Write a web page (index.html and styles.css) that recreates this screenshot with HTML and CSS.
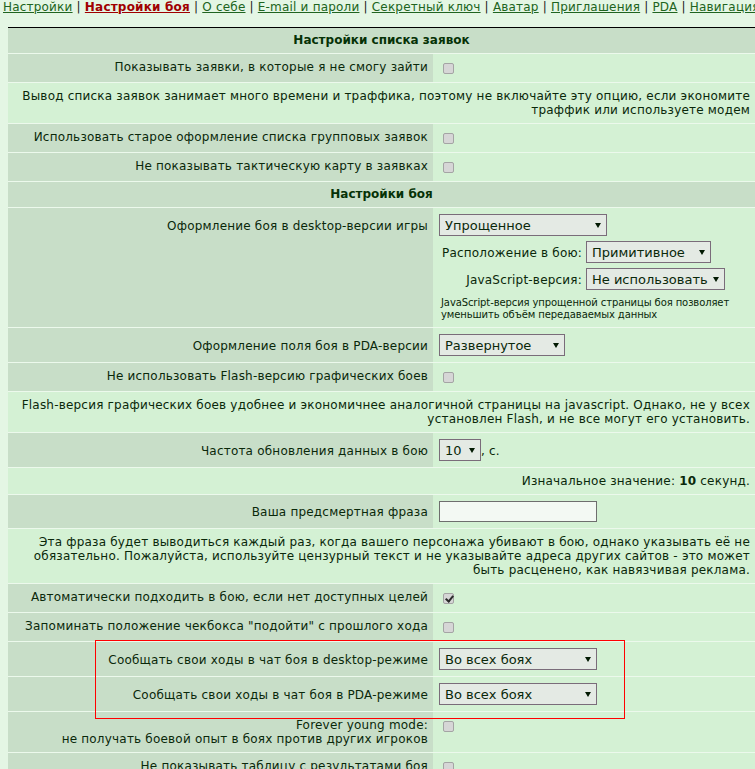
FILE: index.html
```html
<!DOCTYPE html>
<html lang="ru">
<head>
<meta charset="utf-8">
<title>Настройки боя</title>
<link rel="stylesheet" href="styles.css">
</head>
<body>
<nav class="tabs">
  <a href="#">Настройки</a> | <a class="current" href="#">Настройки боя</a> | <a href="#">О себе</a> | <a href="#">E-mail и пароли</a> | <a href="#">Секретный ключ</a> | <a href="#">Аватар</a> | <a href="#">Приглашения</a> | <a href="#">PDA</a> | <a href="#">Навигация</a>
</nav>

<form>
<table class="prefs">
  <tr><th colspan="2" class="sect">Настройки списка заявок</th></tr>
  <tr>
    <td class="lbl">Показывать заявки, в которые я не смогу зайти</td>
    <td class="val"><input type="checkbox" class="cb"></td>
  </tr>
  <tr><td colspan="2" class="note">Вывод списка заявок занимает много времени и траффика, поэтому не включайте эту опцию, если экономите траффик или используете модем</td></tr>
  <tr>
    <td class="lbl">Использовать старое оформление списка групповых заявок</td>
    <td class="val"><input type="checkbox" class="cb"></td>
  </tr>
  <tr>
    <td class="lbl">Не показывать тактическую карту в заявках</td>
    <td class="val"><input type="checkbox" class="cb"></td>
  </tr>

  <tr><th colspan="2" class="sect">Настройки боя</th></tr>
  <tr>
    <td class="lbl">Оформление боя в desktop-версии игры</td>
    <td class="val">
      <span class="dd w-mode"><select><option>Упрощенное</option><option>Обычное</option></select></span>
      <table class="sub">
        <tr>
          <td class="sub-l">Расположение в бою:</td>
          <td><span class="dd w-place"><select><option>Примитивное</option><option>Обычное</option></select></span></td>
        </tr>
        <tr>
          <td class="sub-l">JavaScript-версия:</td>
          <td><span class="dd w-js"><select><option>Не использовать</option><option>Использовать</option></select></span></td>
        </tr>
      </table>
      <div class="hint">JavaScript-версия упрощенной страницы боя позволяет<br>уменьшить объём передаваемых данных</div>
    </td>
  </tr>
  <tr>
    <td class="lbl">Оформление поля боя в PDA-версии</td>
    <td class="val"><span class="dd w-pda"><select><option>Развернутое</option><option>Компактное</option></select></span></td>
  </tr>
  <tr>
    <td class="lbl">Не использовать Flash-версию графических боев</td>
    <td class="val"><input type="checkbox" class="cb"></td>
  </tr>
  <tr><td colspan="2" class="note">Flash-версия графических боев удобнее и экономичнее аналогичной страницы на javascript. Однако, не у всех установлен Flash, и не все могут его установить.</td></tr>
  <tr>
    <td class="lbl">Частота обновления данных в бою</td>
    <td class="val"><span class="dd w-rate"><select><option>10</option><option>20</option><option>30</option></select></span>, с.</td>
  </tr>
  <tr><td colspan="2" class="note">Изначальное значение: <b>10</b> секунд.</td></tr>
  <tr>
    <td class="lbl">Ваша предсмертная фраза</td>
    <td class="val"><input type="text" class="txt"></td>
  </tr>
  <tr><td colspan="2" class="note">Эта фраза будет выводиться каждый раз, когда вашего персонажа убивают в бою, однако указывать её не обязательно. Пожалуйста, используйте цензурный текст и не указывайте адреса других сайтов - это может быть расценено, как навязчивая реклама.</td></tr>
  <tr>
    <td class="lbl">Автоматически подходить в бою, если нет доступных целей</td>
    <td class="val"><input type="checkbox" class="cb" checked></td>
  </tr>
  <tr>
    <td class="lbl">Запоминать положение чекбокса "подойти" с прошлого хода</td>
    <td class="val"><input type="checkbox" class="cb"></td>
  </tr>
  <tr>
    <td class="lbl lbl-mark"><span class="mark"></span>Сообщать свои ходы в чат боя в desktop-режиме</td>
    <td class="val"><span class="dd w-chat"><select><option>Во всех боях</option><option>Никогда</option></select></span></td>
  </tr>
  <tr>
    <td class="lbl">Сообщать свои ходы в чат боя в PDA-режиме</td>
    <td class="val"><span class="dd w-chat"><select><option>Во всех боях</option><option>Никогда</option></select></span></td>
  </tr>
  <tr>
    <td class="lbl">Forever young mode:<br>не получать боевой опыт в боях против других игроков</td>
    <td class="val"><input type="checkbox" class="cb"></td>
  </tr>
  <tr>
    <td class="lbl">Не показывать таблицу с результатами боя</td>
    <td class="val"><input type="checkbox" class="cb"></td>
  </tr>
  <tr>
    <td class="lbl">Не показывать лог боя</td>
    <td class="val"><input type="checkbox" class="cb"></td>
  </tr>
</table>
</form>
</body>
</html>
```

FILE: styles.css
```css
html, body {
  margin: 0;
  padding: 0;
}

body {
  background: #e4f6e4;
  color: #0a280a;
  font-family: "DejaVu Sans", Verdana, sans-serif;
  font-size: 12px;
  letter-spacing: 0.2px;
  overflow: hidden;
}

/* section tabs */
.tabs {
  white-space: nowrap;
  font-size: 12px;
  letter-spacing: 0.2px;
  line-height: 15px;
  height: 27px;
  padding-left: 3px;
  color: #1a1a1a;
}

.tabs a {
  color: #206420;
}

.tabs a.current {
  color: #a00000;
  font-weight: bold;
}

/* settings table */
.prefs {
  margin-left: 8px;
  width: 747px;
  border-collapse: collapse;
  border-top: 1px solid #000;
}

.prefs > tbody > tr > td,
.prefs > tbody > tr > th {
  padding: 6px 5px;
  border-bottom: 1px solid #ecf9ec;
  vertical-align: baseline;
  line-height: 14px;
}

.prefs > tbody > tr > th.sect {
  padding: 5px 5px 6px;
  background: #c8dec8;
  color: #063206;
  font-weight: bold;
  letter-spacing: 0;
  text-align: center;
}

.prefs > tbody > tr > td.lbl {
  background: #c8dec8;
  text-align: right;
  width: 415px;
}

.prefs > tbody > tr > td.val {
  background: #d4f1d4;
  padding-left: 6px;
  text-align: left;
}

.prefs > tbody > tr > td.note {
  background: #d4f1d4;
  text-align: right;
}

.lbl-mark {
  position: relative;
}

/* red frame around the chat options */
.mark {
  position: absolute;
  left: 87px;
  top: -2px;
  width: 530px;
  height: 79px;
  box-sizing: border-box;
  border: 1px solid #ff0000;
  pointer-events: none;
}

/* checkboxes */
.cb {
  appearance: none;
  -webkit-appearance: none;
  box-sizing: border-box;
  width: 11px;
  height: 11px;
  margin: 0 4px 2px 4px;
  border: 1px solid #a4a4a4;
  border-radius: 2px;
  background: #d6d6d6;
  vertical-align: -5px;
  position: relative;
}

.cb:checked::after {
  content: "";
  position: absolute;
  left: 3px;
  top: 0px;
  width: 3px;
  height: 6px;
  border-right: 2px solid #2a2a2a;
  border-bottom: 2px solid #2a2a2a;
  transform: rotate(40deg);
}

/* drop-down lists */
.dd {
  position: relative;
  display: inline-block;
  vertical-align: baseline;
}

.dd select {
  appearance: none;
  -webkit-appearance: none;
  box-sizing: border-box;
  width: 100%;
  height: 22px;
  margin: 0;
  padding: 0 13px 0 5px;
  border: 1px solid #7a6c7a;
  border-radius: 0;
  background: #e4eae4;
  color: #0a280a;
  font-family: "DejaVu Sans", Verdana, sans-serif;
  font-size: 13px;
}

.dd::after {
  content: "";
  position: absolute;
  right: 6px;
  top: 9px;
  border-left: 3px solid transparent;
  border-right: 3px solid transparent;
  border-top: 5px solid #021a02;
  pointer-events: none;
}

.w-mode { width: 168px; }
.w-place { width: 125px; }
.w-js { width: 139px; }
.w-pda { width: 126px; }
.w-rate { width: 42px; }
.w-chat { width: 158px; }

.txt {
  box-sizing: border-box;
  width: 158px;
  height: 21px;
  margin: 0;
  border: 1px solid #6e6e6e;
  background: #f3f9f3;
  vertical-align: baseline;
}

/* nested options of the desktop layout */
.sub {
  border-collapse: separate;
  border-spacing: 2px;
  margin-top: 1px;
}

.sub td {
  padding: 2px 1px 1px;
  vertical-align: baseline;
  white-space: nowrap;
}

.sub-l {
  text-align: right;
}

.hint {
  font-size: 10px;
  letter-spacing: -0.1px;
  line-height: 12px;
  margin: 4px 0 0 2px;
}
```
